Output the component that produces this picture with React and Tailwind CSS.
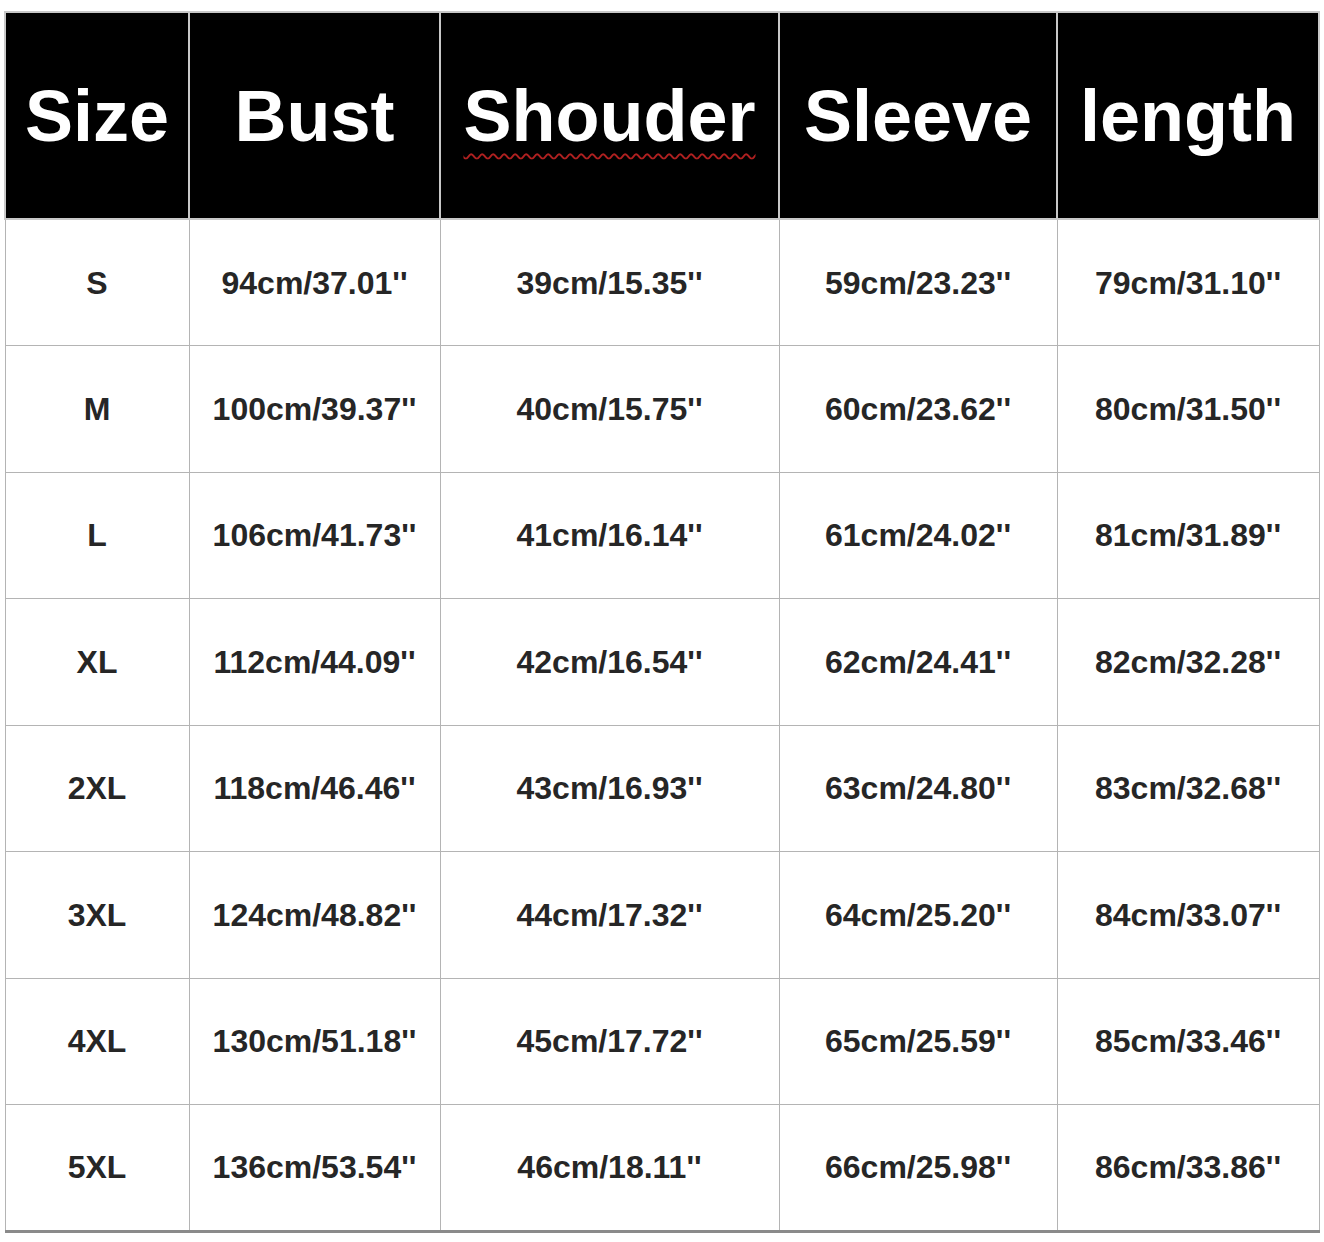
import React from "react";

const headers = ["Size", "Bust", "Shouder", "Sleeve", "length"];
const widths = ["w-[184px]", "w-[251px]", "w-[339px]", "w-[278px]", "w-[262px]"];

const rows = [
  ["S", "94cm/37.01''", "39cm/15.35''", "59cm/23.23''", "79cm/31.10''"],
  ["M", "100cm/39.37''", "40cm/15.75''", "60cm/23.62''", "80cm/31.50''"],
  ["L", "106cm/41.73''", "41cm/16.14''", "61cm/24.02''", "81cm/31.89''"],
  ["XL", "112cm/44.09''", "42cm/16.54''", "62cm/24.41''", "82cm/32.28''"],
  ["2XL", "118cm/46.46''", "43cm/16.93''", "63cm/24.80''", "83cm/32.68''"],
  ["3XL", "124cm/48.82''", "44cm/17.32''", "64cm/25.20''", "84cm/33.07''"],
  ["4XL", "130cm/51.18''", "45cm/17.72''", "65cm/25.59''", "85cm/33.46''"],
  ["5XL", "136cm/53.54''", "46cm/18.11''", "66cm/25.98''", "86cm/33.86''"],
];

export default function App() {
  return (
    <div className="w-[1324px] h-[1242px] bg-white pt-[11px] pl-[4px] font-['Liberation_Sans',Arial,sans-serif]">
      <table className="border-collapse table-fixed w-[1314px] border-b-[3px] border-b-[#8a8a8a]">
        <thead>
          <tr className="h-[207px] bg-black">
            {headers.map((h, i) => (
              <th
                key={h}
                className={`${widths[i]} p-0 text-center align-middle text-white font-bold text-[72px] leading-none border-2 border-[#c8c8c8]`}
              >
                {h === "Shouder" ? (
                  <span className="underline decoration-wavy decoration-[#b02020] decoration-2 underline-offset-[12px]">
                    {h}
                  </span>
                ) : (
                  h
                )}
              </th>
            ))}
          </tr>
        </thead>
        <tbody>
          {rows.map((r) => (
            <tr key={r[0]} className="h-[126.5px]">
              {r.map((c, i) => (
                <td
                  key={i}
                  className="p-0 text-center align-middle text-[#262626] font-bold text-[32px] leading-none border border-[#b4b4b4]"
                >
                  {c}
                </td>
              ))}
            </tr>
          ))}
        </tbody>
      </table>
    </div>
  );
}
